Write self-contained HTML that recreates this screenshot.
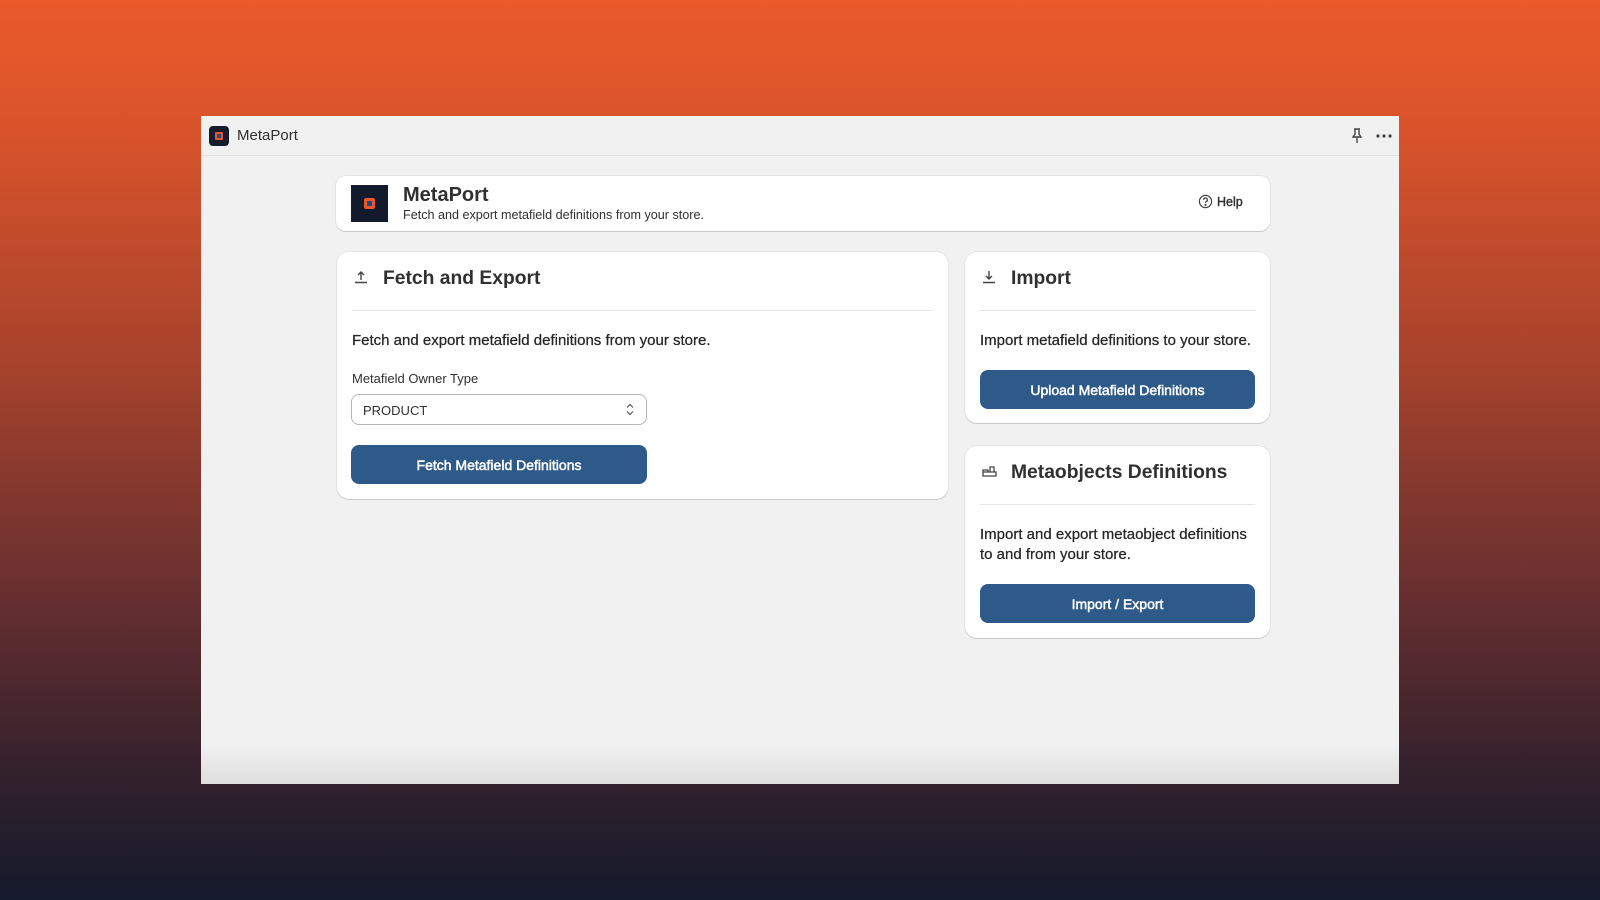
<!DOCTYPE html>
<html><head><meta charset="utf-8"><style>
*{box-sizing:border-box;margin:0;padding:0}
body{width:1600px;height:900px;overflow:hidden;font-family:"Liberation Sans",sans-serif;color:#303030;
background:linear-gradient(180deg,#ea5a2b 0%,#d8532b 15%,#a8432c 40%,#6a3030 65%,#30202c 87%,#141a2c 100%);position:relative}
.win{position:absolute;left:201px;top:116px;width:1198px;height:668px;background:#f1f1f1;overflow:hidden}
.win:after{content:"";position:absolute;left:0;right:0;bottom:0;height:40px;background:linear-gradient(180deg,rgba(0,0,0,0),rgba(0,0,0,.08))}
.tb{height:40px;border-bottom:1px solid #e3e3e3;display:flex;align-items:center;padding-left:8px;font-size:15px;color:#303030;position:relative}
.tb .ic{width:20px;height:20px;background:#161c2c;border-radius:4px;margin-right:8px;position:relative}
.tb .ic:after{content:"";position:absolute;left:6px;top:6px;width:8px;height:8px;background:#e8572a;border-radius:1px;box-shadow:inset 0 0 0 2px #e8572a,inset 0 0 0 4px #1e4b8c}
.card{position:absolute;background:#fff;border-radius:12px;box-shadow:0 1px 0 rgba(0,0,0,.12),0 0 0 1px rgba(0,0,0,.05)}
.h2{font-size:19.3px;font-weight:bold;color:#303030;position:absolute;left:46px;top:16px}
.hi{position:absolute;left:17px;top:18px}
.div{position:absolute;left:15px;right:15px;top:58px;border-top:1px solid #e6e6e6}
.desc{position:absolute;left:15px;font-size:15px;color:#262626;line-height:20px;-webkit-text-stroke:.25px #262626}
.btn{position:absolute;left:15px;right:15px;height:39px;background:#2e5a8a;border-radius:8px;color:#fff;font-size:14px;-webkit-text-stroke:.5px #fff;display:flex;align-items:center;justify-content:center}
</style></head><body>
<div class="win">
 <div class="tb"><div class="ic"></div>MetaPort
  <svg style="position:absolute;left:1148px;top:11px" width="16" height="18" viewBox="0 0 16 18" fill="none" stroke="#444" stroke-width="1.4"><path d="M5 2h6M6 2v5l-2 3h8l-2-3V2M8 10v6"/></svg>
  <svg style="position:absolute;left:1175px;top:18px" width="16" height="4"><circle cx="2" cy="2" r="1.6" fill="#444"/><circle cx="8" cy="2" r="1.6" fill="#444"/><circle cx="14" cy="2" r="1.6" fill="#444"/></svg>
 </div>
</div>
<div class="card" style="left:336px;top:176px;width:934px;height:55px;border-radius:10px">
 <div style="position:absolute;left:15px;top:9px;width:37px;height:37px;background:#121a2c"><div style="position:absolute;left:13px;top:13px;width:11px;height:11px;background:#e8572a;border-radius:2px"><div style="position:absolute;left:3px;top:3px;width:5px;height:5px;background:#1e4b8c"></div></div></div>
 <div style="position:absolute;left:67px;top:8px;font-size:20px;font-weight:bold">MetaPort</div>
 <div style="position:absolute;left:67px;top:32px;font-size:12.6px;color:#303030">Fetch and export metafield definitions from your store.</div>
 <div style="position:absolute;left:862px;top:18px;font-size:12.5px;color:#303030;-webkit-text-stroke:.4px #303030;display:flex;align-items:center"><svg width="15" height="15" viewBox="0 0 16 16" fill="none" stroke="#444" stroke-width="1.3" style="margin-right:4px"><circle cx="8" cy="8" r="6.5"/><path d="M6 6.3a2 2 0 1 1 2.6 1.9c-.5.2-.6.6-.6 1.2"/><circle cx="8" cy="11.6" r=".5" fill="#444"/></svg>Help</div>
</div>
<div class="card" style="left:337px;top:252px;width:611px;height:247px">
 <svg class="hi" width="14" height="14" viewBox="0 0 14 14" fill="none" stroke="#444" stroke-width="1.4"><path d="M7 10V2M4 5l3-3 3 3M1 12.5h12"/></svg>
 <div class="h2">Fetch and Export</div><div class="div"></div>
 <div class="desc" style="top:79px">Fetch and export metafield definitions from your store.</div>
 <div style="position:absolute;left:15px;top:119px;font-size:13px">Metafield Owner Type</div>
 <div style="position:absolute;left:14px;top:142px;width:296px;height:31px;border:1px solid #b5b5b5;border-radius:8px;font-size:13px;padding:8px 11px">PRODUCT
  <svg style="position:absolute;right:12px;top:8px" width="8" height="13" viewBox="0 0 8 13" fill="none" stroke="#555" stroke-width="1.2"><path d="M1 4.5l3-3 3 3M1 8.5l3 3 3-3"/></svg></div>
 <div class="btn" style="top:193px;width:296px;left:14px">Fetch Metafield Definitions</div>
</div>
<div class="card" style="left:965px;top:252px;width:305px;height:171px">
 <svg class="hi" width="14" height="14" viewBox="0 0 14 14" fill="none" stroke="#444" stroke-width="1.4"><path d="M7 1v8M4 6l3 3 3-3M1 12.5h12"/></svg>
 <div class="h2">Import</div><div class="div"></div>
 <div class="desc" style="top:79px">Import metafield definitions to your store.</div>
 <div class="btn" style="top:118px">Upload Metafield Definitions</div>
</div>
<div class="card" style="left:965px;top:446px;width:305px;height:192px">
 <svg class="hi" width="15" height="14" viewBox="0 0 15 14" fill="none" stroke="#444" stroke-width="1.3"><path d="M1 8h13v4H1zM1 8V6h5v2M8 8V3h4v5"/></svg>
 <div class="h2">Metaobjects Definitions</div><div class="div"></div>
 <div class="desc" style="top:79px;width:276px">Import and export metaobject definitions to and from your store.</div>
 <div class="btn" style="top:138px">Import / Export</div>
</div>
</body></html>
